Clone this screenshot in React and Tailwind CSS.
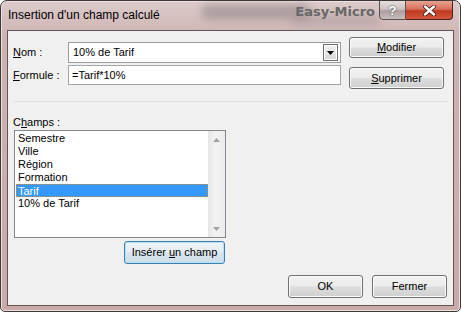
import React from 'react';

const font = { fontFamily: '"Liberation Sans", Arial, sans-serif' };

function WinButton({ children, className = '' }) {
  return (
    <button
      type="button"
      className={`rounded-[3px] border border-[#707070] bg-[linear-gradient(#f2f2f2_0%,#ebebeb_48%,#dddddd_52%,#cfcfcf_100%)] text-[11px] leading-none text-black shadow-[inset_0_0_0_1px_#fbfbfb] ${className}`}
    >
      {children}
    </button>
  );
}

const fields = ['Semestre', 'Ville', 'Région', 'Formation', 'Tarif', '10% de Tarif'];

export default function App() {
  return (
    <div className="h-[313px] w-[461px] bg-white" style={font}>
      <div className="flex h-[312px] w-[461px] flex-col rounded-t-[7px] rounded-b-[5px] border border-[#3f3838] bg-[linear-gradient(180deg,#dccbca_0%,#cdb3b1_12%,#c8aaa8_100%)] shadow-[inset_0_0_0_1px_#ece2e1]">
        {/* title bar */}
        <div className="relative flex h-[29px] items-start overflow-hidden">
          <span className="absolute left-[200px] top-[4px] h-[14px] w-[110px] rounded-full bg-[#8d7f84] opacity-60 blur-[5px]" />
          <span className="absolute left-[290px] top-[14px] h-[10px] w-[90px] rounded-full bg-[#a08f92] opacity-50 blur-[5px]" />
          <span className="relative pl-[7px] pt-[7px] text-[12px] leading-[15px] text-black">
            Insertion d'un champ calculé
          </span>
          <span className="relative ml-auto mt-[3px] mr-[4px] text-[14px] font-bold leading-[16px] text-[#676767]" style={{ fontFamily: '"DejaVu Sans", sans-serif', fontSize: '13px' }}>
            Easy-Micro
          </span>
          <div className="relative -mt-px mr-[7px] flex">
            <div className="flex h-[20px] w-[27px] items-center justify-center rounded-bl-[4px] border border-[#5a5050] bg-[linear-gradient(#e6dede_0%,#cdc2c2_45%,#ad9e9e_55%,#c9bdbd_100%)] text-[13px] font-bold leading-none text-white [text-shadow:0_0_2px_#333]">
              ?
            </div>
            <div className="flex h-[20px] w-[47px] items-center justify-center rounded-br-[4px] border border-l-0 border-[#4a2020] bg-[linear-gradient(#e8a393_0%,#d7705b_45%,#c0381f_55%,#d2583a_100%)]">
              <svg width="13" height="11" viewBox="0 0 13 11">
                <path d="M2 1.5 L11 9.5 M11 1.5 L2 9.5" stroke="#3a1a14" strokeWidth="4" strokeLinecap="round" />
                <path d="M2 1.5 L11 9.5 M11 1.5 L2 9.5" stroke="#ffffff" strokeWidth="2.4" strokeLinecap="round" />
              </svg>
            </div>
          </div>
        </div>

        {/* client area */}
        <div className="mx-[6px] flex h-[276px] flex-col border border-[#5e5657] bg-[#f0f0f0] text-[11px] leading-[13px] text-black">
          <div className="flex pl-[5px] pt-[6px]">
            <div className="flex flex-col gap-[2px] pt-[5px]">
              <div className="flex items-center">
                <span className="w-[55px]">
                  <u className="underline-offset-1">N</u>om :
                </span>
                <div className="flex h-[21px] w-[273px] items-center border border-[#9c9c9c] bg-white pl-[4px]">
                  <span className="flex-1">10% de Tarif</span>
                  <div className="mr-[2px] flex h-[17px] w-[15px] items-center justify-center border border-[#6f6f6f] bg-[linear-gradient(#f4f4f4,#d6d6d6)] shadow-[inset_0_0_0_1px_#ffffff]">
                    <svg width="7" height="4" viewBox="0 0 7 4">
                      <path d="M0 0 H7 L3.5 4 Z" fill="#000" />
                    </svg>
                  </div>
                </div>
              </div>
              <div className="flex items-center">
                <span className="w-[55px]">
                  <u className="underline-offset-1">F</u>ormule :
                </span>
                <div className="flex h-[20px] w-[273px] items-center border border-[#a6a6a6] bg-white pl-[3px]">
                  =Tarif*10%
                </div>
              </div>
            </div>
            <div className="ml-[8px] flex flex-col gap-[9px]">
              <WinButton className="h-[21px] w-[95px]">
                <u className="underline-offset-1">M</u>odifier
              </WinButton>
              <WinButton className="h-[22px] w-[95px]">
                <u className="underline-offset-1">S</u>upprimer
              </WinButton>
            </div>
          </div>

          <div className="ml-[6px] mr-[5px] mt-[12px] h-px bg-[#d5dfe5]" />

          <div className="mt-[14px] pl-[5px]">
            C<u className="underline-offset-1">h</u>amps :
          </div>
          <div className="ml-[6px] mt-px flex h-[108px] w-[212px] border border-[#828790] bg-white">
            <div className="flex flex-1 flex-col pl-px pt-px">
              {fields.map((f) => (
                <div
                  key={f}
                  className={`h-[13px] px-[2px] leading-[12px] ${
                    f === 'Tarif'
                      ? 'border border-dotted border-[#d5893a] bg-[#3399ff] px-px text-white'
                      : ''
                  }`}
                >
                  {f}
                </div>
              ))}
            </div>
            <div className="flex w-[17px] flex-col justify-between bg-[linear-gradient(90deg,#e6e6e6,#f2f2f2_40%,#ececec)]">
              <div className="flex h-[17px] items-center justify-center">
                <svg width="7" height="4" viewBox="0 0 7 4">
                  <path d="M3.5 0 L7 4 H0 Z" fill="#a3a3a3" />
                </svg>
              </div>
              <div className="flex h-[17px] items-center justify-center">
                <svg width="7" height="4" viewBox="0 0 7 4">
                  <path d="M0 0 H7 L3.5 4 Z" fill="#a3a3a3" />
                </svg>
              </div>
            </div>
          </div>
          <div className="ml-[116px] mt-[3px]">
            <button
              type="button"
              className="h-[23px] w-[101px] rounded-[3px] border border-[#3c7fb1] bg-[linear-gradient(#eef4f8_0%,#e4edf3_48%,#d8e5ee_52%,#cfdee9_100%)] text-[11px] leading-none text-black shadow-[inset_0_0_0_1px_#b5e1f6]"
            >
              Insérer <u className="underline-offset-1">u</u>n champ
            </button>
          </div>

          <div className="mt-[11px] flex justify-end gap-[9px] pr-[6px]">
            <WinButton className="h-[23px] w-[75px]">OK</WinButton>
            <WinButton className="h-[23px] w-[75px]">Fermer</WinButton>
          </div>
        </div>
      </div>
    </div>
  );
}
